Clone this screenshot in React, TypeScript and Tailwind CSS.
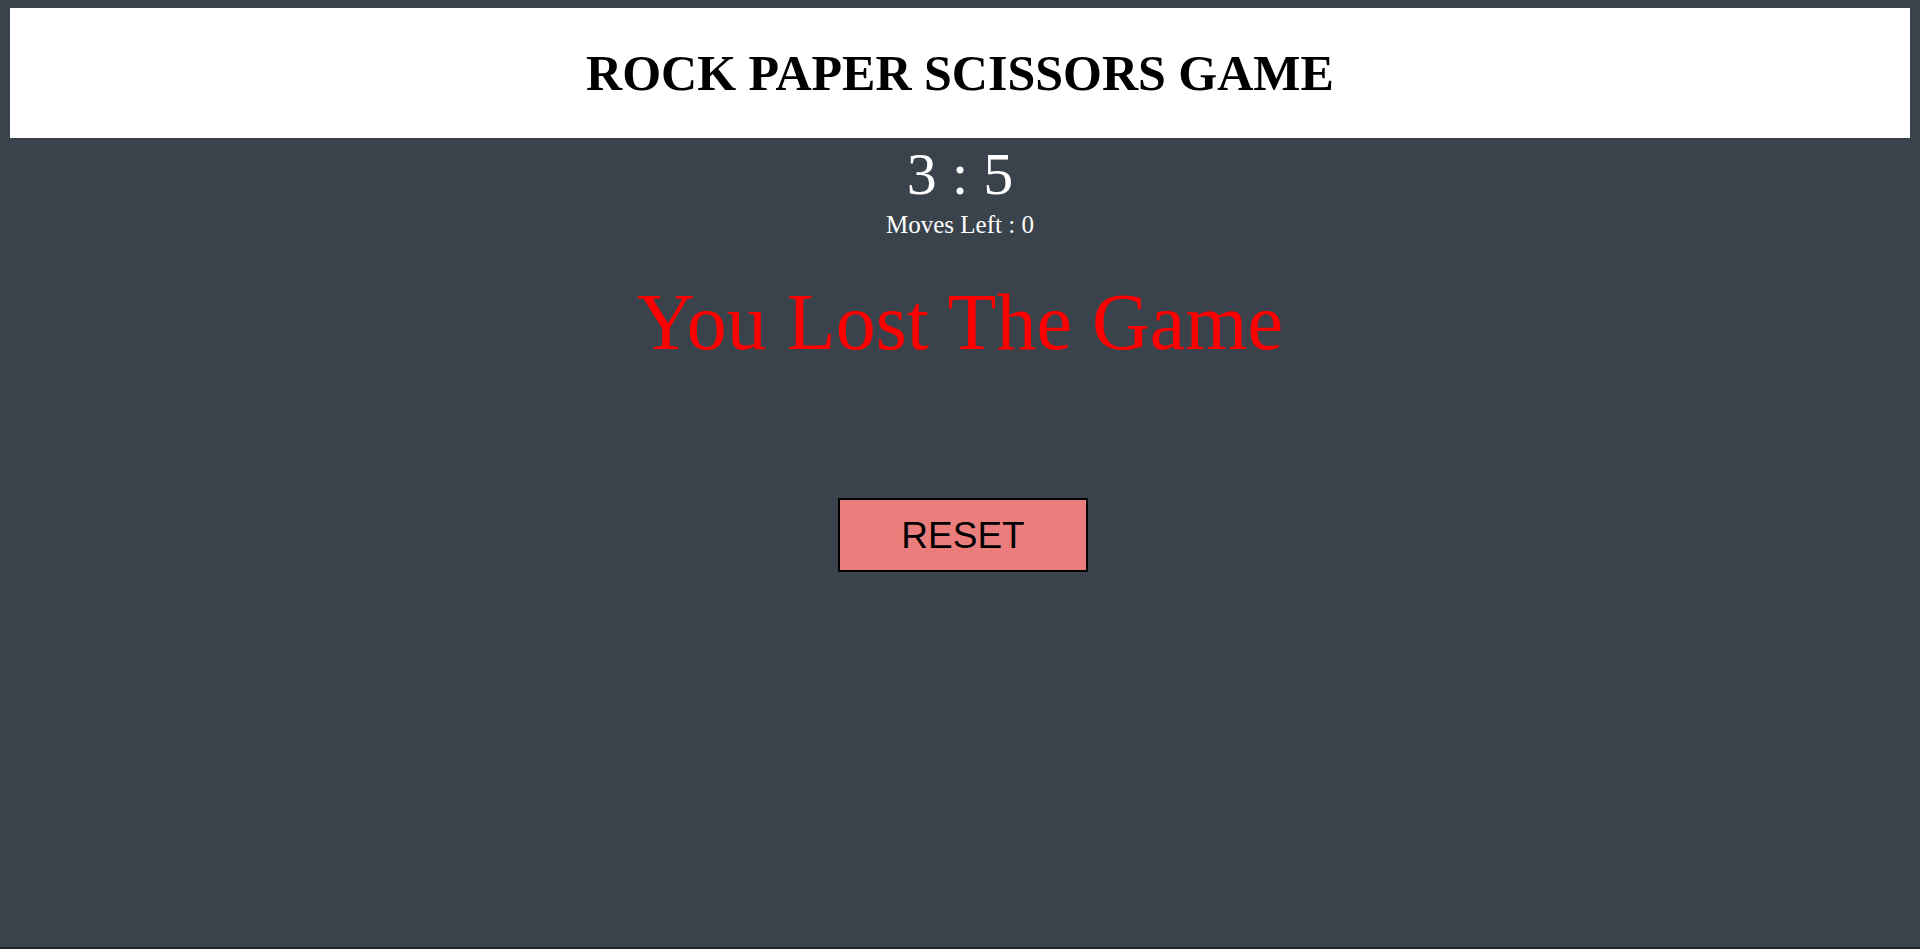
export default function App() {
  const playerScore = 3;
  const computerScore = 5;
  const movesLeft = 0;

  return (
    <div className="flex h-[949px] flex-col border-b-2 border-[#1f2326] bg-[#3a434c] font-['Liberation_Serif',serif] text-white">
      <header className="mx-[10px] mt-2 flex h-[130px] items-center justify-center bg-white">
        <h1 className="text-[50px] font-bold leading-[56px] text-black">ROCK PAPER SCISSORS GAME</h1>
      </header>

      <div className="mt-[3px] text-center text-[60px] leading-[66px]">
        {playerScore} : {computerScore}
      </div>
      <div className="mt-1 text-center text-[25px] leading-[27px]">Moves Left : {movesLeft}</div>

      <div className="mt-10 text-center text-[80px] leading-[89px] text-[#ff0000]">You Lost The Game</div>

      <div className="mt-[131px] flex justify-center pl-[6px]">
        <button className="h-[74px] w-[250px] border-2 border-black bg-[#ec7d7d] pt-[2px] font-['Liberation_Sans',Arial,sans-serif] text-[37px] text-black">
          RESET
        </button>
      </div>
    </div>
  );
}
